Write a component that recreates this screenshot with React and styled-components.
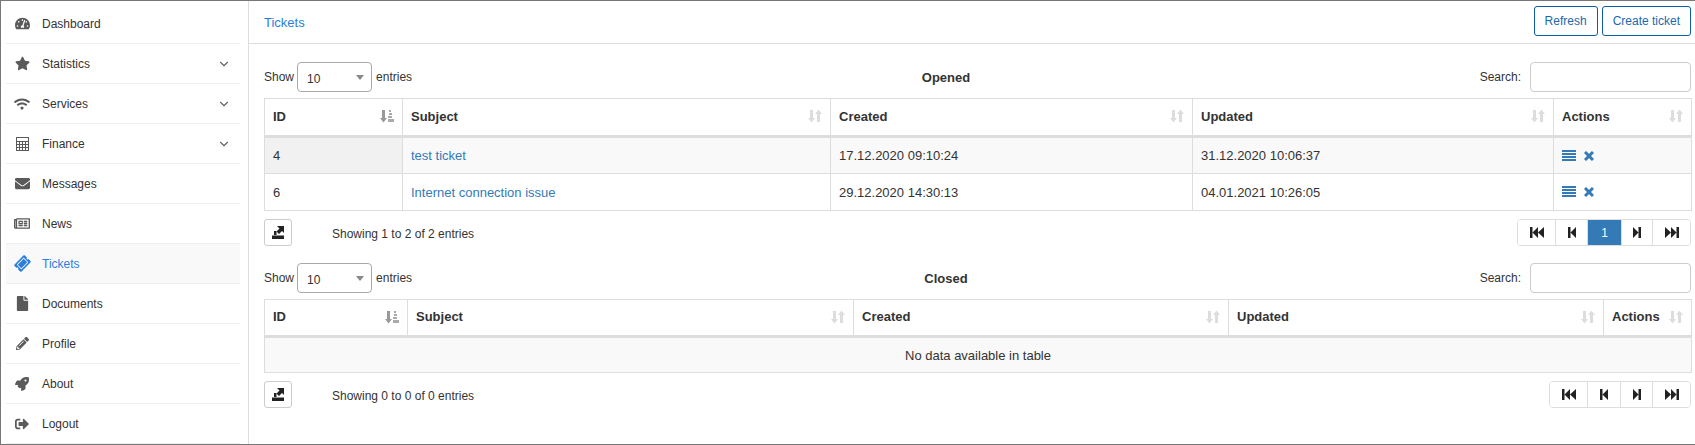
import styled, { createGlobalStyle } from 'styled-components'
import {
  FaTachometerAlt,
  FaStar,
  FaWifi,
  FaEnvelope,
  FaRegNewspaper,
  FaTicketAlt,
  FaFile,
  FaPencilAlt,
  FaRocket,
  FaSignOutAlt,
} from 'react-icons/fa'
import { FiChevronDown } from 'react-icons/fi'

const GlobalStyle = createGlobalStyle`
  html, body {
    margin: 0;
    padding: 0;
    background: #fff;
  }
  * {
    box-sizing: border-box;
  }
  body {
    font-family: "Liberation Sans", Arial, sans-serif;
    font-size: 12px;
    color: #333;
  }
`

const Frame = styled.div`
  display: flex;
  width: 1695px;
  height: 445px;
  border: 1px solid #777;
  border-right: none;
  overflow: hidden;
`

const Sidebar = styled.aside`
  flex: 0 0 248px;
  border-right: 1px solid #ddd;
  padding: 3px 8px 0 5px;
`

const NavItem = styled.a`
  display: flex;
  align-items: center;
  height: 40px;
  padding-left: 8px;
  border-bottom: 1px solid #eee;
  color: ${(props) => (props.$active ? '#2a7fdc' : '#333')};
  background: ${(props) => (props.$active ? '#f9f9f9' : 'transparent')};
`

const NavIcon = styled.span`
  display: flex;
  justify-content: center;
  align-items: center;
  width: 16px;
  margin-right: 12px;
  font-size: ${(props) => props.$size || 15}px;
  color: ${(props) => (props.$active ? '#2a7fdc' : '#5a5a5a')};
`

const NavLabel = styled.span`
  flex: 1;
`

const NavChevron = styled.span`
  display: flex;
  margin-right: 9px;
  font-size: 14px;
  color: #666;
`

const Main = styled.main`
  flex: 1;
  min-width: 0;
`

const TopBar = styled.header`
  display: flex;
  align-items: center;
  justify-content: space-between;
  height: 43px;
  padding: 0 4px 2px 15px;
  border-bottom: 1px solid #ddd;
`

const Crumb = styled.a`
  padding-top: 2px;
  font-size: 13px;
  color: #2a7fdc;
`

const TopActions = styled.div`
  display: flex;
  gap: 4px;
`

const OutlineButton = styled.button`
  height: 30px;
  padding: 0 10px;
  font: inherit;
  color: #1a69ad;
  background: #fff;
  border: 1px solid #0b5da5;
  border-radius: 3px;
`

const Content = styled.div`
  padding: 18px 4px 0 15px;
`

const Block = styled.section`
  margin-bottom: 17px;
`

const Controls = styled.div`
  display: grid;
  grid-template-columns: 340px 684px 1fr;
  align-items: center;
  height: 30px;
  margin-bottom: 6px;
`

const Length = styled.div`
  display: flex;
  align-items: center;
`

const SelectBox = styled.div`
  position: relative;
  width: 75px;
  height: 30px;
  margin: 0 4px 0 3px;
  padding: 9px 0 0 9px;
  font-size: 12px;
  border: 1px solid #aaa;
  border-radius: 4px;
  line-height: 14px;

  &::after {
    content: '';
    position: absolute;
    right: 7px;
    top: 12px;
    border-style: solid;
    border-width: 5px 4px 0;
    border-color: #888 transparent transparent;
  }
`

const TableTitle = styled.div`
  text-align: center;
  font-weight: 700;
  font-size: 13px;
`

const SearchWrap = styled.div`
  display: flex;
  justify-content: flex-end;
  align-items: center;
  gap: 9px;
`

const SearchInput = styled.input`
  width: 161px;
  height: 30px;
  border: 1px solid #ccc;
  border-radius: 4px;
  background: #fff;
`

const Table = styled.table`
  width: 100%;
  table-layout: fixed;
  border-collapse: collapse;
  font-size: 13px;
  border: 1px solid #ddd;
`

const HeadCell = styled.th`
  height: ${(props) => props.$height}px;
  padding: 0 8px 2px;
  text-align: left;
  font-size: 13px;
  font-weight: 700;
  border: 1px solid #ddd;
  border-bottom: 3px solid #ddd;
`

const HeadInner = styled.div`
  display: flex;
  align-items: center;
  justify-content: space-between;
`

const Row = styled.tr`
  background: ${(props) => (props.$odd ? '#f9f9f9' : '#fff')};
`

const Cell = styled.td`
  height: 37px;
  padding: 0 8px;
  border: 1px solid #ddd;
  background: ${(props) => (props.$sorted ? '#f1f1f1' : 'transparent')};
`

const EmptyCell = styled.td`
  height: 36px;
  text-align: center;
  background: #f9f9f9;
  border: 1px solid #ddd;
`

const Link = styled.a`
  color: #337ab7;
`

const ActionIcons = styled.div`
  display: flex;
  align-items: center;
  gap: 8px;
  color: #337ab7;
`

const Footer = styled.div`
  display: flex;
  align-items: center;
  height: 27px;
  margin-top: 8px;
`

const ExportButton = styled.button`
  display: flex;
  align-items: center;
  justify-content: center;
  width: 28px;
  height: 27px;
  padding: 0;
  background: #fff;
  border: 1px solid #ccc;
  border-radius: 3px;
`

const Info = styled.div`
  flex: 1;
  padding: 3px 0 0 40px;
`

const Pager = styled.div`
  display: flex;
  height: 27px;
  border: 1px solid #ddd;
  border-radius: 4px;
  overflow: hidden;
`

const PageButton = styled.div`
  display: flex;
  align-items: center;
  justify-content: center;
  width: ${(props) => props.$width}px;
  font-size: 12px;
  color: ${(props) => (props.$active ? '#fff' : '#222')};
  background: ${(props) => (props.$active ? '#337ab7' : '#fff')};
  border-left: ${(props) => (props.$first ? 'none' : '1px solid #ddd')};
`

const SortSvg = styled.svg`
  flex: none;
  width: 14px;
  height: 14px;
`

const SortBoth = () => (
  <SortSvg viewBox="0 0 14 14" fill="#ddd">
    <path d="M2 1h3v8h2l-3.500 4.500L0 9h2zM9 13V5H7l3.500-4.500L14 5h-2v8z" />
  </SortSvg>
)

const SortAsc = () => (
  <SortSvg viewBox="0 0 14 14">
    <path fill="#999" d="M2 1h3v8h2l-3.500 4.500L0 9h2z" />
    <path fill="#aaa" d="M9 1h2v2H9zM9 4h3v2H9zM8 7h4v2H8zM8 10h6v3H8z" />
  </SortSvg>
)

const ExportIcon = () => (
  <svg width="12" height="13" viewBox="0 0 12 13" fill="#222">
    <path d="M5 0h7v7l-2-2-3 3-2.500-2.500 3-3z" />
    <path d="M2 5h2.500v4H2zM0 9.500h12V13H0z" />
  </svg>
)

const ListIcon = () => (
  <svg width="14" height="12" viewBox="0 0 14 12" fill="currentColor">
    <path d="M0 0h14v2H0zM0 3h14v2H0zM0 6h14v2H0zM0 9h14v2H0z" />
  </svg>
)

const CrossIcon = () => (
  <svg width="10" height="10" viewBox="0 0 10 10" fill="none" stroke="currentColor" strokeWidth="3">
    <path d="M1 1l8 8M9 1l-8 8" />
  </svg>
)

const FastBackward = () => (
  <svg width="14" height="11" viewBox="0 0 14 11" fill="currentColor">
    <path d="M0 0h2.500v11H0zM2.500 5.500L8 0v11zM8 5.500L14 0v11z" />
  </svg>
)

const StepBackward = () => (
  <svg width="8" height="11" viewBox="0 0 8 11" fill="currentColor">
    <path d="M0 0h2.500v11H0zM2.500 5.500L8 0v11z" />
  </svg>
)

const StepForward = () => (
  <svg width="8" height="11" viewBox="0 0 8 11" fill="currentColor">
    <path d="M8 0H5.500v11H8zM5.500 5.500L0 0v11z" />
  </svg>
)

const FastForward = () => (
  <svg width="14" height="11" viewBox="0 0 14 11" fill="currentColor">
    <path d="M14 0h-2.500v11H14zM11.500 5.500L6 0v11zM6 5.500L0 0v11z" />
  </svg>
)

const CalculatorIcon = () => (
  <svg width="13" height="14" viewBox="0 0 13 14" fill="#5a5a5a">
    <path d="M0 0h13v14H0zM1 1v3h11V1zM1 5v2h2V5zm3 0v2h2V5zm3 0v2h2V5zm3 0v2h2V5zM1 8v2h2V8zm3 0v2h2V8zm3 0v2h2V8zm3 0v2h2V8zM1 11v2h2v-2zm3 0v2h2v-2zm3 0v2h2v-2zm3 0v2h2v-2z" fillRule="evenodd" />
  </svg>
)

const navItems = [
  { label: 'Dashboard', icon: <FaTachometerAlt /> },
  { label: 'Statistics', icon: <FaStar />, sub: true },
  { label: 'Services', icon: <FaWifi />, size: 16, sub: true },
  { label: 'Finance', icon: <CalculatorIcon />, sub: true },
  { label: 'Messages', icon: <FaEnvelope /> },
  { label: 'News', icon: <FaRegNewspaper />, size: 17 },
  { label: 'Tickets', icon: <FaTicketAlt style={{ transform: 'rotate(-45deg)' }} />, active: true },
  { label: 'Documents', icon: <FaFile /> },
  { label: 'Profile', icon: <FaPencilAlt />, size: 13 },
  { label: 'About', icon: <FaRocket />, size: 14 },
  { label: 'Logout', icon: <FaSignOutAlt />, size: 14 },
]

const openedTickets = [
  { id: 4, subject: 'test ticket', created: '17.12.2020 09:10:24', updated: '31.12.2020 10:06:37' },
  { id: 6, subject: 'Internet connection issue', created: '29.12.2020 14:30:13', updated: '04.01.2021 10:26:05' },
]

const columns = ['ID', 'Subject', 'Created', 'Updated', 'Actions']

const TicketTable = ({ title, widths, headHeight, rows, info, pages }) => (
  <Block>
    <Controls>
      <Length>
        Show <SelectBox>10</SelectBox> entries
      </Length>
      <TableTitle>{title}</TableTitle>
      <SearchWrap>
        Search: <SearchInput />
      </SearchWrap>
    </Controls>
    <Table>
      <colgroup>
        {widths.map((w) => (
          <col key={w} width={w} />
        ))}
      </colgroup>
      <thead>
        <tr>
          {columns.map((name, i) => (
            <HeadCell key={name} $height={headHeight}>
              <HeadInner>
                {name}
                {i === 0 ? <SortAsc /> : <SortBoth />}
              </HeadInner>
            </HeadCell>
          ))}
        </tr>
      </thead>
      <tbody>
        {rows.length === 0 && (
          <tr>
            <EmptyCell colSpan={5}>No data available in table</EmptyCell>
          </tr>
        )}
        {rows.map((row, i) => (
          <Row key={row.id} $odd={i % 2 === 0}>
            <Cell $sorted={i === 0}>{row.id}</Cell>
            <Cell>
              <Link>{row.subject}</Link>
            </Cell>
            <Cell>{row.created}</Cell>
            <Cell>{row.updated}</Cell>
            <Cell>
              <ActionIcons>
                <ListIcon />
                <CrossIcon />
              </ActionIcons>
            </Cell>
          </Row>
        ))}
      </tbody>
    </Table>
    <Footer>
      <ExportButton>
        <ExportIcon />
      </ExportButton>
      <Info>{info}</Info>
      <Pager>
        <PageButton $first $width={37}>
          <FastBackward />
        </PageButton>
        <PageButton $width={pages ? 32 : 33}>
          <StepBackward />
        </PageButton>
        {pages && (
          <PageButton $active $width={34}>
            1
          </PageButton>
        )}
        <PageButton $width={pages ? 31 : 32}>
          <StepForward />
        </PageButton>
        <PageButton $width={38}>
          <FastForward />
        </PageButton>
      </Pager>
    </Footer>
  </Block>
)

export default function App() {
  return (
    <>
      <GlobalStyle />
      <Frame>
        <Sidebar>
          {navItems.map((item) => (
            <NavItem key={item.label} $active={item.active}>
              <NavIcon $active={item.active} $size={item.size}>
                {item.icon}
              </NavIcon>
              <NavLabel>{item.label}</NavLabel>
              {item.sub && (
                <NavChevron>
                  <FiChevronDown />
                </NavChevron>
              )}
            </NavItem>
          ))}
        </Sidebar>
        <Main>
          <TopBar>
            <Crumb>Tickets</Crumb>
            <TopActions>
              <OutlineButton>Refresh</OutlineButton>
              <OutlineButton>Create ticket</OutlineButton>
            </TopActions>
          </TopBar>
          <Content>
            <TicketTable
              title="Opened"
              widths={[138, 428, 362, 361, 138]}
              headHeight={38}
              rows={openedTickets}
              info="Showing 1 to 2 of 2 entries"
              pages
            />
            <TicketTable
              title="Closed"
              widths={[143, 446, 375, 375, 88]}
              headHeight={37}
              rows={[]}
              info="Showing 0 to 0 of 0 entries"
            />
          </Content>
        </Main>
      </Frame>
    </>
  )
}
